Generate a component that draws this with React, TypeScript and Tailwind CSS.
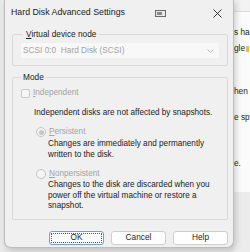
import React from "react";

const font = { fontFamily: '"Liberation Sans", Arial, sans-serif' };

function Radio({ checked }: { checked?: boolean }) {
  return (
    <span className="flex h-[10px] w-[10px] shrink-0 items-center justify-center rounded-full border border-[#c4c4c4] bg-[#f4f4f4]">
      {checked && <span className="h-[5px] w-[5px] rounded-full bg-[#c4c4c4]" />}
    </span>
  );
}

function Btn({ label, focus }: { label: string; focus?: boolean }) {
  return (
    <button
      type="button"
      className={
        "flex h-[14px] w-[55px] items-center justify-center rounded-[3px] border bg-white text-[8.3px] leading-none text-[#1b1b1b] " +
        (focus ? "border-[#7a9cc6] outline-1 outline-dotted outline-offset-[-3px] outline-[#555]" : "border-[#cfcfcf]")
      }
    >
      {label}
    </button>
  );
}

export default function App() {
  return (
    <div className="flex h-[252px] w-[250px] overflow-hidden bg-[#e6e6e6]" style={font}>
      <div className="w-[4px] shrink-0 bg-[#e9e9e9]" />

      <div className="relative z-10 flex h-[248px] w-[230px] shrink-0 flex-col rounded-b-[7px] border border-t-0 border-[#bdbdbd] bg-[#f0f0f0] shadow-[2px_2px_6px_rgba(0,0,0,0.18)]">
        <div className="flex h-[26px] shrink-0 items-center pl-[6px] pr-[6px] text-[8.8px] text-[#1b1b1b]">
          <span className="whitespace-nowrap">Hard Disk Advanced Settings</span>
          <svg className="ml-[30px] h-[7px] w-[11px]" viewBox="0 0 11 7">
            <rect x="0.5" y="0.5" width="10" height="6" fill="#e8e8e8" stroke="#6b6b6b" />
            <rect x="2" y="2" width="5" height="3" fill="#8a8a8a" />
          </svg>
          <svg className="ml-auto mr-[5px] h-[9px] w-[9px]" viewBox="0 0 9 9">
            <path d="M0.5 0.5 L8.5 8.5 M8.5 0.5 L0.5 8.5" stroke="#222" strokeWidth="0.9" />
          </svg>
        </div>

        <fieldset className="mt-[3px] ml-[7px] mr-[5px] rounded-[2px] border border-[#d9d9d9] px-[8px] pb-[7px]">
          <legend className="ml-[2px] px-[3px] text-[8.3px] leading-[10px] text-[#1b1b1b]">
            <span className="underline">V</span>irtual device node
          </legend>
          <div className="mt-[4px] flex h-[15px] items-center justify-between rounded-[2px] bg-[#f8f8f8] pl-[2px] pr-[5px] text-[8.3px] text-[#a3a3a3]">
            <span className="whitespace-nowrap">SCSI 0:0&nbsp;&nbsp;Hard Disk (SCSI)</span>
            <svg className="h-[4px] w-[7px]" viewBox="0 0 7 4">
              <path d="M0.5 0.5 L3.5 3.5 L6.5 0.5" fill="none" stroke="#b0b0b0" strokeWidth="0.8" />
            </svg>
          </div>
        </fieldset>

        <fieldset className="mt-[6px] ml-[7px] mr-[5px] rounded-[2px] border border-[#d9d9d9] pl-[8px] pr-[4px] pb-[7px] text-[8.2px]">
          <legend className="px-[2px] text-[8.3px] leading-[10px] text-[#1b1b1b]">Mode</legend>
          <div className="mt-[6px] flex h-[10px] items-center gap-[3px] text-[#a3a3a3]">
            <span className="h-[9px] w-[9px] rounded-[2px] border border-[#c9c9c9] bg-[#f6f6f6]" />
            <span>
              <span className="underline">I</span>ndependent
            </span>
          </div>
          <div className="mt-[10px] whitespace-nowrap pl-[13px] leading-[10px] text-[#1b1b1b]">
            Independent disks are not affected by snapshots.
          </div>
          <div className="mt-[9px] flex h-[10px] items-center gap-[3px] pl-[15px] text-[#a3a3a3]">
            <Radio checked />
            <span>
              <span className="underline">P</span>ersistent
            </span>
          </div>
          <div className="mt-[2px] whitespace-nowrap pl-[27px] leading-[10.5px] text-[#1b1b1b]">
            Changes are immediately and permanently
            <br />
            written to the disk.
          </div>
          <div className="mt-[9px] flex h-[10px] items-center gap-[3px] pl-[15px] text-[#a3a3a3]">
            <Radio />
            <span>
              <span className="underline">N</span>onpersistent
            </span>
          </div>
          <div className="mt-[1px] whitespace-nowrap pl-[27px] leading-[10.5px] text-[#1b1b1b]">
            Changes to the disk are discarded when you
            <br />
            power off the virtual machine or restore a
            <br />
            snapshot.
          </div>
        </fieldset>

        <div className="mt-[11px] mr-[5px] flex justify-end gap-[7px]">
          <Btn label="OK" focus />
          <Btn label="Cancel" />
          <Btn label="Help" />
        </div>
      </div>

      <div className="flex flex-1 flex-col overflow-hidden bg-[#fbfbfb] text-[8.3px] text-[#1b1b1b]">
        <div className="h-[12px] shrink-0 border-b border-[#dcdcdc] bg-[#f2f2f2]" />
        <div className="mt-[14px] whitespace-nowrap">s ha</div>
        <div className="mt-[4px] flex items-center whitespace-nowrap">
          gle <span className="ml-[1px] h-[6px] w-[3px] bg-[#e8c040]" />
        </div>
        <div className="mt-[30px] whitespace-nowrap">hen</div>
        <div className="mt-[14px] whitespace-nowrap">e sp</div>
        <div className="mt-[33px] whitespace-nowrap">e.</div>
        <div className="mt-auto h-[60px] shrink-0 bg-[#ececec]" />
      </div>
    </div>
  );
}
